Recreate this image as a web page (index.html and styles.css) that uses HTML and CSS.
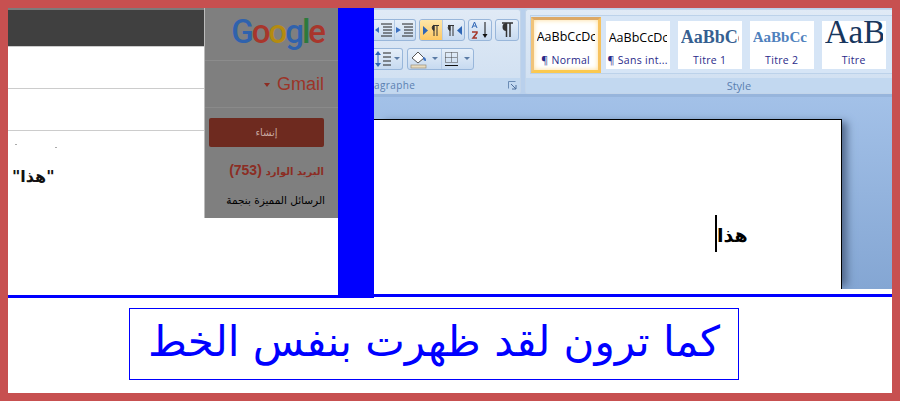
FILE: index.html
```html
<!DOCTYPE html>
<html lang="ar">
<head>
<meta charset="utf-8">
<title>هذا</title>
<link rel="stylesheet" href="styles.css">
</head>
<body>

<div id="frame">

<div id="shots">

    <div id="gmail-col">
        <div id="gmail">
            <div id="thread">
                <div class="thread-head"></div>
                <div class="thread-row"></div>
                <div class="thread-row"></div>
                <div class="thread-body">
                    <div class="specks"><span></span><span></span></div>
                    <p class="quote" dir="ltr">"هذا"</p>
                </div>
            </div>
            <div id="side">
                <div class="logo"><span class="g-blue">G</span><span class="g-red">o</span><span class="g-yellow">o</span><span class="g-blue">g</span><span class="g-green">l</span><span class="g-red">e</span></div>
                <div class="product"><span class="caret-down"></span>Gmail</div>
                <div class="compose">إنشاء</div>
                <div class="inbox" dir="rtl"><span class="inbox-name">البريد الوارد</span> (753)</div>
                <div class="starred" dir="rtl">الرسائل المميزة بنجمة</div>
            </div>
        </div>
    </div>

    <div id="bar"></div>

    <div id="word">
        <div id="ribbon">
            <div class="group group-para">
                <div class="tools">
                    <div class="tool-row">
                        <div class="btn-set set-indent">
                            <span class="btn w-20"><svg width="20" height="14" viewBox="0 0 20 14"><path d="M1 7l4-3v6z" fill="#3a6fc0"/><path d="M7 1h11M9 4h9M9 7h9M9 10h9M7 13h11" stroke="#222" fill="none"/></svg></span>
                            <span class="btn w-21"><svg width="20" height="14" viewBox="0 0 20 14"><path d="M6 7L1 4v6z" fill="#3a6fc0"/><path d="M7 1h11M9 4h9M9 7h9M9 10h9M7 13h11" stroke="#222" fill="none"/></svg></span>
                        </div>
                        <div class="btn-set">
                            <span class="btn w-22 on"><svg width="18" height="13" viewBox="0 0 18 13"><path d="M1 2l5 4.500-5 4.500z" fill="#2f66b5"/><path d="M12 1.500h5M12 1v11M15 1v11M12 6.500a3 3 0 010-5.500z" stroke="#333" fill="#333"/></svg></span>
                            <span class="btn w-22"><svg width="18" height="13" viewBox="0 0 18 13"><path d="M17 2l-5 4.500 5 4.500z" fill="#2f66b5"/><path d="M3 1.500h6M5 1v11M8 1v11M5 6.500a3 3 0 010-5.500z" stroke="#333" fill="#333"/></svg></span>
                        </div>
                        <div class="btn-set">
                            <span class="btn w-22"><svg width="20" height="20" viewBox="0 0 20 20"><path d="M2 8l2.500-6L7 8M3 6h3" stroke="#2f66b5" fill="none"/><path d="M2 12h5v1l-4 5h4" stroke="#a5372b" stroke-width="1.500" fill="none"/><path d="M15 2v14" stroke="#111"/><path d="M12.500 14h5L15 18z" fill="#111"/></svg></span>
                        </div>
                        <div class="btn-set">
                            <span class="btn w-22"><svg width="14" height="16" viewBox="0 0 14 16"><path d="M2 1h11M6.500 1v14M10 1v14" stroke="#333" stroke-width="1.500"/><path d="M6.500 9a4 4 0 010-8z" fill="#333"/></svg></span>
                        </div>
                    </div>
                    <div class="tool-row">
                        <div class="btn-set set-spacing">
                            <span class="btn w-29"><svg width="26" height="18" viewBox="0 0 26 18"><path d="M3 1l-3 4h6zM3 17l-3-4h6z" fill="#2f66b5"/><path d="M3 4v10" stroke="#2f66b5"/><path d="M8 3h8M8 7h8M8 11h8M8 15h8" stroke="#222"/><path d="M19 7h6l-3 3z" fill="#5a7ba5"/></svg></span>
                        </div>
                        <div class="btn-set">
                            <span class="btn w-33"><svg width="30" height="20" viewBox="0 0 30 20"><path d="M2 9l6-6 6 6-6 5z" fill="#fff" stroke="#555"/><path d="M13 8c2 0 3 1 3 4-2 0-3-1-3-4z" fill="#3a6fc0"/><rect x="1" y="16" width="15" height="3" fill="#e8dcc0" stroke="#9a8f78" stroke-width=".7"/><path d="M22 8h6l-3 3z" fill="#5a7ba5"/></svg></span>
                            <span class="btn w-32"><svg width="28" height="16" viewBox="0 0 28 16"><path d="M1.500 1.500h12v10h-12zM7.500 1.500v10M1.500 6.500h12" stroke="#444" stroke-dasharray="1 1" fill="none"/><path d="M1 14.500h13" stroke="#111"/><path d="M20 6h6l-3 3z" fill="#5a7ba5"/></svg></span>
                        </div>
                    </div>
                </div>
                <div class="group-foot foot-para">
                    <span class="foot-clip">agraphe</span>
                    <svg class="launcher" width="9" height="9" viewBox="0 0 9 9"><path d="M.5.500h7M.5.500v7" stroke="#6b8cb5" fill="none"/><path d="M3 3l5 5M8 4v4H4" stroke="#4d6f9c" fill="none"/></svg>
                </div>
            </div>

            <div class="group group-style">
                <div class="gallery">
                    <div class="tile tile-on">
                        <span class="sample s-normal">AaBbCcDc</span>
                        <span class="tile-name">¶ Normal</span>
                    </div>
                    <div class="tile">
                        <span class="sample s-normal">AaBbCcDc</span>
                        <span class="tile-name">¶ Sans int...</span>
                    </div>
                    <div class="tile">
                        <span class="sample s-titre1">AaBbCc</span>
                        <span class="tile-name">Titre 1</span>
                    </div>
                    <div class="tile">
                        <span class="sample s-titre2">AaBbCc</span>
                        <span class="tile-name">Titre 2</span>
                    </div>
                    <div class="tile">
                        <span class="sample s-titre">AaB</span>
                        <span class="tile-name">Titre</span>
                    </div>
                </div>
                <div class="group-foot foot-style">Style</div>
            </div>
        </div>

        <div id="workspace">
            <div id="page">
                <span class="text-caret"></span><span class="typed">هذا</span>
            </div>
        </div>
    </div>

</div>

<div id="caption" dir="rtl">كما ترون لقد ظهرت بنفس الخط</div>

</div>

</body>
</html>
```

FILE: styles.css
```css
html, body {
    margin: 0;
    padding: 0;
}

#frame {
    box-sizing: border-box;
    width: 900px;
    height: 401px;
    border: 8px solid #c75050;
    background: #fff;
    overflow: hidden;
}

#shots {
    display: flex;
    height: 290px;
}

/* gmail screenshot */

#gmail-col {
    box-sizing: border-box;
    width: 330px;
    height: 290px;
    border-bottom: 3px solid #00f;
}

#gmail {
    display: flex;
    height: 210px;
}

#thread {
    box-sizing: border-box;
    width: 197px;
    border-right: 1px solid #bbb;
}

.thread-head {
    height: 36px;
    background: #404040;
    border-top: 2px solid #7c7c7c;
    border-bottom: 1px solid #ccc;
}

.thread-row {
    height: 41px;
    border-bottom: 1px solid #ccc;
}

.specks {
    display: flex;
    gap: 38px;
    height: 18px;
    padding: 13px 0 0 7px;
    box-sizing: border-box;
}

.specks span {
    width: 2px;
    height: 1px;
    background: #aaa;
}

.specks span + span {
    margin-top: 3px;
}

.quote {
    margin: 18px 0 0 4px;
    font-family: "DejaVu Sans", sans-serif;
    font-size: 16px;
    font-weight: bold;
    line-height: 20px;
    color: #111;
}

#side {
    width: 133px;
    background: #7f7f7f;
    font-family: "Liberation Sans", "DejaVu Sans", sans-serif;
    text-align: right;
}

.logo {
    height: 53px;
    box-sizing: border-box;
    padding: 1px 14px 0 0;
    border-bottom: 1px solid #8c8c8c;
    font-family: Roboto, sans-serif;
    font-size: 33px;
    font-weight: 500;
    line-height: 46px;
    letter-spacing: -2px;
}

.g-blue { color: #2f62ad; }
.g-red { color: #a8362c; }
.g-yellow { color: #b58b10; }
.g-green { color: #2c7a3c; }

.product {
    box-sizing: border-box;
    height: 47px;
    padding: 11px 14px 0 0;
    border-bottom: 1px solid #8a8a8a;
    font-size: 18px;
    line-height: 24px;
    color: #9c3428;
}

.caret-down {
    display: inline-block;
    width: 0;
    height: 0;
    margin: 0 7px 3px 0;
    border: 3px solid transparent;
    border-top: 4px solid #8c2d23;
    border-bottom: 0;
}

.compose {
    width: 115px;
    height: 29px;
    margin: 10px 0 0 4px;
    border-radius: 2px;
    background: #6e2a1f;
    font-family: "DejaVu Sans", sans-serif;
    font-size: 10px;
    line-height: 29px;
    text-align: center;
    color: #c9a8a0;
}

.inbox {
    margin: 15px 14px 0 0;
    font-family: "Liberation Sans", sans-serif;
    font-size: 14px;
    font-weight: bold;
    line-height: 16px;
    color: #8c2d23;
}

.inbox-name {
    font-family: "DejaVu Sans", sans-serif;
    font-size: 10px;
}

.starred {
    margin: 12px 13px 0 0;
    font-family: "DejaVu Sans", sans-serif;
    font-size: 10.5px;
    line-height: 16px;
    color: #000;
}

#bar {
    width: 36px;
    height: 290px;
    background: #00f;
}

/* word screenshot */

#word {
    box-sizing: border-box;
    width: 518px;
    height: 289px;
    border-bottom: 3px solid #00f;
    display: flex;
    flex-direction: column;
}

#ribbon {
    display: flex;
    gap: 4px;
    box-sizing: border-box;
    height: 89px;
    padding-top: 1px;
    background: #b9d0ec;
    border-bottom: 3px solid #97b5dc;
    font-family: "Open Sans", "Liberation Sans", sans-serif;
}

.group {
    display: flex;
    flex-direction: column;
    box-sizing: border-box;
    height: 85px;
    background: linear-gradient(#e0eaf6, #cfdff1);
    border: 1px solid #c3d5ea;
    border-radius: 3px;
}

.group-para {
    width: 147px;
    border-left: 0;
    border-radius: 0 3px 3px 0;
}

.group-style {
    width: 368px;
    border-right: 0;
    border-radius: 3px 0 0 3px;
}

.tools {
    flex: 1;
    padding-top: 9px;
}

.tool-row {
    display: flex;
    gap: 3px;
    height: 21px;
    margin-bottom: 8px;
}

.tool-row + .tool-row {
    gap: 4px;
    margin-bottom: 0;
}

.btn-set {
    display: flex;
    box-sizing: border-box;
    height: 22px;
    background: linear-gradient(#e6eff9, #c7daf0);
    border: 1px solid #98b6da;
    border-radius: 3px;
}

.set-indent,
.set-spacing {
    border-left: 0;
    border-radius: 0 3px 3px 0;
}

.btn {
    display: flex;
    align-items: center;
    justify-content: center;
    box-sizing: border-box;
    height: 20px;
}

.btn + .btn {
    border-left: 1px solid #b5cbe6;
}

.btn.on {
    background: linear-gradient(#fde6a8, #fdc862);
    border-radius: 2px 0 0 2px;
}

.w-20 { width: 20px; }
.w-21 { width: 21px; }
.w-22 { width: 22px; }
.w-29 { width: 28px; }
.w-32 { width: 32px; }
.w-33 { width: 33px; }

.group-foot {
    box-sizing: border-box;
    height: 15px;
    background: #c2d8f0;
    font-size: 11px;
    line-height: 15px;
    color: #5a7fb0;
}

.foot-para {
    display: flex;
    justify-content: space-between;
    align-items: center;
    padding: 0 3px 0 0;
    font-size: 10px;
    letter-spacing: .4px;
}

.foot-style {
    text-align: center;
    padding-left: 60px;
}

.gallery {
    flex: 1;
    display: flex;
    align-items: center;
    gap: 8px;
    margin: 5px 0 4px 4px;
    background: #d6e5f6;
    border: 1px solid #bcd2ea;
    border-right: 0;
}

.tile {
    display: flex;
    flex-direction: column;
    align-items: center;
    box-sizing: border-box;
    width: 64px;
    height: 48px;
    background: #fff;
    overflow: hidden;
}

.tile-on {
    width: 70px;
    height: 56px;
    margin-right: -3px;
    border: 3px solid #f7c25e;
    border-top-color: #dca866;
    border-left-color: #f0c37a;
    border-bottom-color: #fbc94f;
    box-shadow: inset 0 0 5px #ffdc92;
}

.sample {
    display: block;
    box-sizing: border-box;
    width: 58px;
    height: 30px;
    overflow: hidden;
    white-space: nowrap;
    text-align: left;
    font-size: 12.5px;
    line-height: 33px;
    color: #000;
    font-family: "Open Sans", sans-serif;
}

.tile-on .sample {
    height: 31px;
    line-height: 34px;
}

.s-titre1 {
    font-family: "Liberation Serif", serif;
    font-weight: bold;
    font-size: 18px;
    color: #365f91;
}

.s-titre2 {
    font-family: "Liberation Serif", serif;
    font-weight: bold;
    font-size: 15px;
    color: #4f81bd;
}

.s-titre {
    font-family: "Liberation Serif", serif;
    font-size: 33px;
    line-height: 22px;
    color: #17365d;
}

.tile-name {
    font-size: 10.5px;
    line-height: 18px;
    color: #2a2a8a;
    white-space: nowrap;
    letter-spacing: .3px;
}

#workspace {
    height: 192px;
    padding-top: 22px;
    box-sizing: border-box;
    overflow: hidden;
    background: linear-gradient(#a3c1e8, #84a6d3);
}

#page {
    box-sizing: border-box;
    display: flex;
    width: 468px;
    height: 170px;
    padding: 95px 0 0 341px;
    background: #fff;
    border-top: 1px solid #000;
    border-right: 1px solid #000;
    box-shadow: 8px 0 8px -3px #52688a;
}

.text-caret {
    width: 2px;
    height: 37px;
    background: #000;
}

.typed {
    height: 37px;
    font-family: "DejaVu Sans", sans-serif;
    font-size: 19px;
    font-weight: bold;
    line-height: 41px;
    color: #000;
}

/* caption */

#caption {
    box-sizing: border-box;
    width: 610px;
    height: 72px;
    margin: 10px 0 0 121px;
    border: 1px solid #00f;
    font-family: "DejaVu Sans", sans-serif;
    font-size: 42px;
    line-height: 66px;
    text-align: center;
    color: #00f;
    white-space: nowrap;
}
```
